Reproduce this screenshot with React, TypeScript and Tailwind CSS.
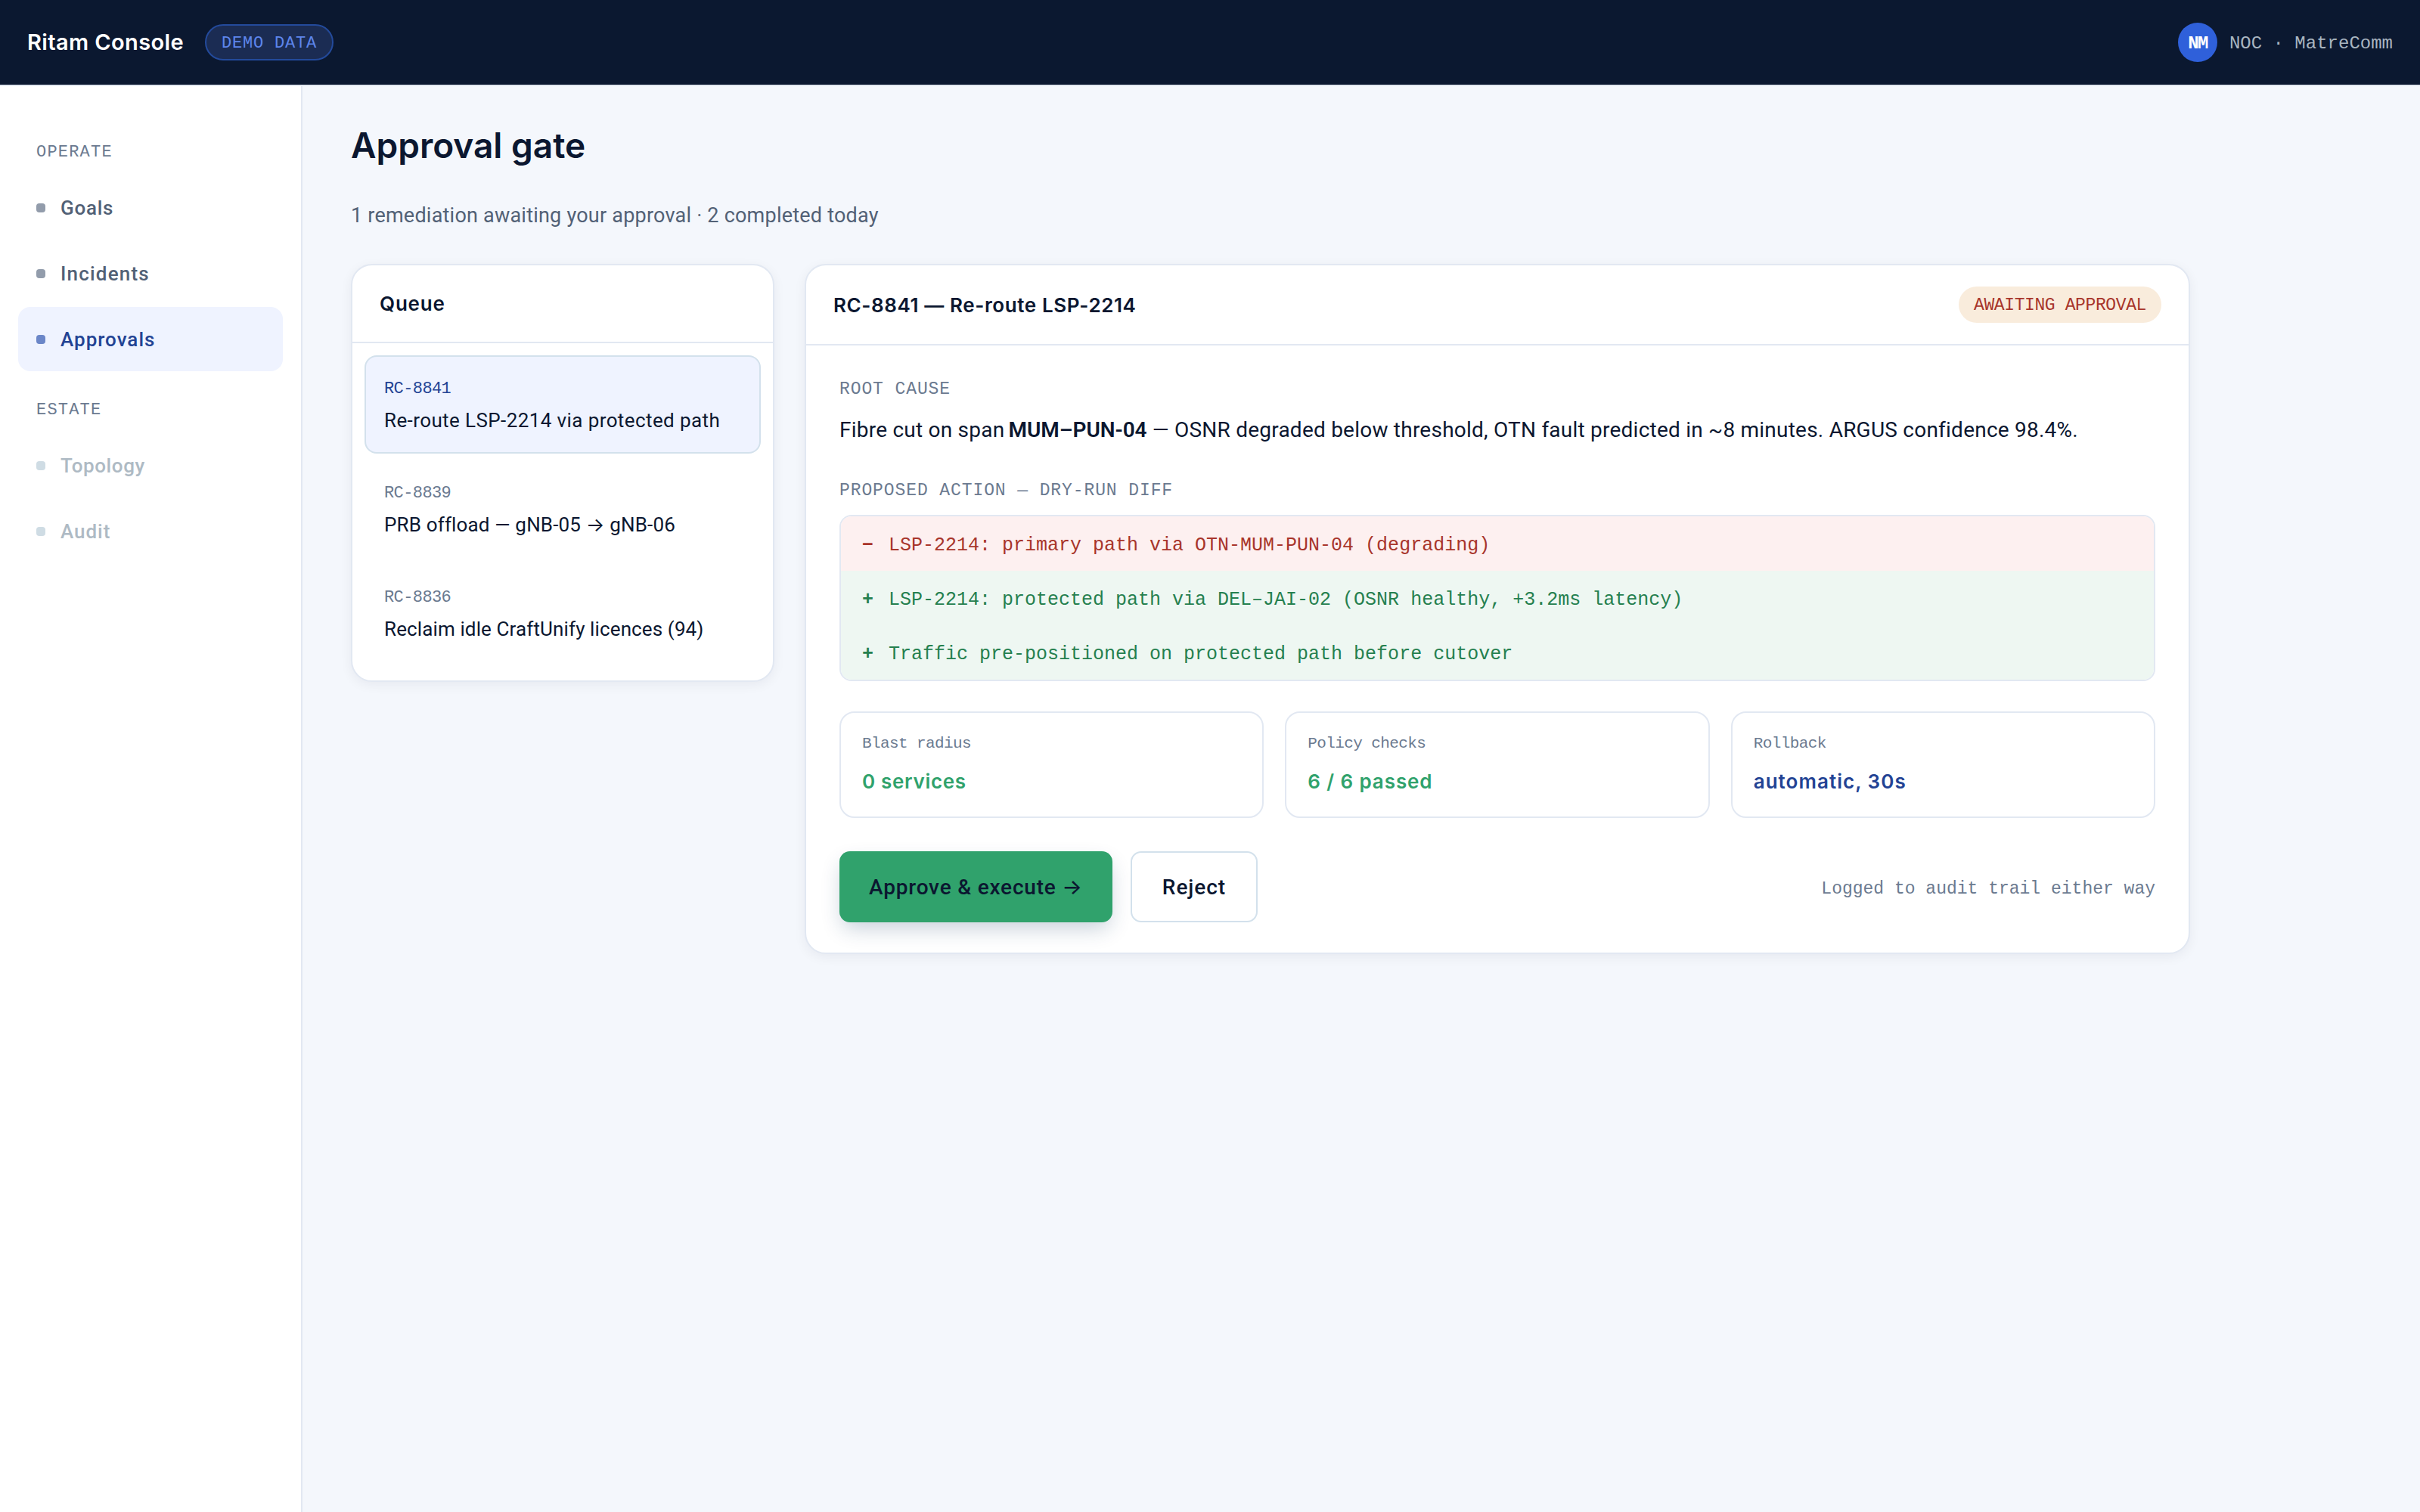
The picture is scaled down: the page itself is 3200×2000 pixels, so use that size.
import { useState } from "react";
import clsx from "clsx";

const MONO = "font-['Liberation_Mono',monospace]";
const HEADING = "font-['Inter',sans-serif]";

const NAV = [
  {
    label: "OPERATE",
    items: [
      { name: "Goals", tracking: "tracking-[0.72px]", disabled: false },
      { name: "Incidents", tracking: "tracking-[1.2px]", disabled: false },
      { name: "Approvals", tracking: "tracking-[1px]", disabled: false },
    ],
  },
  {
    label: "ESTATE",
    items: [
      { name: "Topology", tracking: "tracking-[0.6px]", disabled: true },
      { name: "Audit", tracking: "tracking-[0.97px]", disabled: true },
    ],
  },
];

const QUEUE = [
  {
    id: "RC-8841",
    title: "Re-route LSP-2214 via protected path",
    tracking: "tracking-[0.4px]",
  },
  {
    id: "RC-8839",
    title: "PRB offload — gNB-05 → gNB-06",
    tracking: "tracking-[0.16px]",
  },
  {
    id: "RC-8836",
    title: "Reclaim idle CraftUnify licences (94)",
    tracking: "tracking-[0.12px]",
  },
];

const DIFF = [
  { op: "−", text: "LSP-2214: primary path via OTN-MUM-PUN-04 (degrading)" },
  {
    op: "+",
    text: "LSP-2214: protected path via DEL–JAI-02 (OSNR healthy, +3.2ms latency)",
  },
  { op: "+", text: "Traffic pre-positioned on protected path before cutover" },
];

const STATS = [
  {
    label: "Blast radius",
    value: "0 services",
    style: "text-[#30a26c] tracking-[0.68px]",
  },
  {
    label: "Policy checks",
    value: "6 / 6 passed",
    style: "text-[#30a26c] tracking-[0.9px]",
  },
  {
    label: "Rollback",
    value: "automatic, 30s",
    style: "text-[#234394] tracking-[1.05px]",
  },
];

export default function App() {
  return (
    <div className="flex h-[2000px] flex-col bg-[#f4f7fc] font-['Roboto','Inter',sans-serif] text-[#0b1730]">
      <TopBar />
      <div className="flex min-h-0 flex-1">
        <Sidebar />
        <ApprovalScreen />
      </div>
    </div>
  );
}

function TopBar() {
  return (
    <header className="flex h-[114px] shrink-0 items-center border-b-2 border-[#e2e8f0] bg-[#0b1830] px-9">
      <span
        className={clsx(
          HEADING,
          "text-[29px] font-semibold tracking-[0.38px] text-white"
        )}
      >
        Ritam Console
      </span>
      <span
        className={clsx(
          MONO,
          "ml-7 flex h-12 items-center rounded-full border-2 border-[#234a9b] bg-[#1b2c53] px-5 pt-0.5 text-[22px] tracking-[0.8px] text-[#5e86ec]"
        )}
      >
        DEMO DATA
      </span>
      <div className={clsx(MONO, "ml-auto flex items-center gap-4")}>
        <span className="flex size-[52px] items-center justify-center rounded-full bg-[#2f60da] pt-1 text-[24px] font-bold tracking-[-1.6px] text-white">
          NM
        </span>
        <span className="pt-1 text-[24px] text-[#a9b5c0]">
          NOC · MatreComm
        </span>
      </div>
    </header>
  );
}

function Sidebar() {
  const [active, setActive] = useState("Approvals");

  return (
    <aside className="w-[400px] shrink-0 border-r-2 border-[#e2e8f2] bg-white px-6 pt-[38px]">
      {NAV.map((group) => (
        <div key={group.label}>
          <h2
            className={clsx(
              MONO,
              "px-6 pt-[35px] pb-[15px] text-[22px] leading-[30px] tracking-[1.2px] text-[#6b7a90]"
            )}
          >
            {group.label}
          </h2>
          {group.items.map((item) => (
            <button
              key={item.name}
              disabled={item.disabled}
              onClick={() => setActive(item.name)}
              className={clsx(
                "mb-0.5 flex h-[85px] w-full items-center gap-5 rounded-2xl px-6 text-[26px] font-medium",
                item.tracking,
                item.disabled && "text-[#aebac4]",
                !item.disabled && active !== item.name && "text-[#526176]",
                active === item.name && "bg-[#eff3ff] text-[#234394]"
              )}
            >
              <span
                className={clsx(
                  "size-3 rounded-[4px]",
                  item.disabled && "bg-[#cfdce4]",
                  !item.disabled && active !== item.name && "bg-[#929cab]",
                  active === item.name && "bg-[#6b86c8]"
                )}
              />
              <span className="pt-0.5">{item.name}</span>
            </button>
          ))}
        </div>
      ))}
    </aside>
  );
}

function ApprovalScreen() {
  const [selected, setSelected] = useState("RC-8841");

  return (
    <main className="flex-1 px-16 pt-[50px]">
      <h1 className={clsx(HEADING, "text-[46px] leading-[56px] font-semibold")}>
        Approval gate
      </h1>
      <p className="mt-[45px] text-[27px] leading-10 tracking-[0.22px] text-[#526176]">
        1 remediation awaiting your approval · 2 completed today
      </p>
      <div className="mt-11 grid max-w-[2432px] grid-cols-[560px_1fr] items-start gap-10">
        <Queue selected={selected} onSelect={setSelected} />
        <Detail />
      </div>
    </main>
  );
}

function Queue({
  selected,
  onSelect,
}: {
  selected: string;
  onSelect: (id: string) => void;
}) {
  return (
    <section className="rounded-[28px] border-2 border-[#e2e8f2] bg-white shadow-[0_4px_16px_rgba(11,24,48,0.06)]">
      <div className="flex h-[103px] items-center border-b-2 border-[#e2e8f2] px-9">
        <h2
          className={clsx(
            HEADING,
            "text-[26px] font-semibold tracking-[0.8px]"
          )}
        >
          Queue
        </h2>
      </div>
      <div className="flex flex-col gap-2 px-4 pt-4 pb-6">
        {QUEUE.map((item) => (
          <button
            key={item.id}
            onClick={() => onSelect(item.id)}
            className={clsx(
              "flex h-[130px] flex-col gap-[7px] rounded-2xl border-2 px-6 pt-[27px] text-left",
              selected === item.id
                ? "border-[#d3e1ec] bg-[#eff3ff]"
                : "border-transparent"
            )}
          >
            <span
              className={clsx(
                MONO,
                "text-[22px] leading-8 tracking-[-0.6px]",
                selected === item.id ? "text-[#234394]" : "text-[#6b7a90]"
              )}
            >
              {item.id}
            </span>
            <span className={clsx("text-[26px] leading-9", item.tracking)}>
              {item.title}
            </span>
          </button>
        ))}
      </div>
    </section>
  );
}

function Detail() {
  return (
    <section className="rounded-[28px] border-2 border-[#e2e8f2] bg-white shadow-[0_4px_16px_rgba(11,24,48,0.06)]">
      <div className="flex h-[106px] items-center justify-between border-b-2 border-[#e2e8f2] px-9">
        <h2
          className={clsx(
            HEADING,
            "text-[26px] font-semibold tracking-[0.6px]"
          )}
        >
          RC-8841 — Re-route LSP-2214
        </h2>
        <span
          className={clsx(
            MONO,
            "flex h-12 items-center rounded-full bg-[#f9ecdc] px-5 pt-0.5 text-[23px] tracking-[-0.39px] text-[#a8352b]"
          )}
        >
          AWAITING APPROVAL
        </span>
      </div>

      <div className="px-11 pt-[42px] pb-10">
        <Label>ROOT CAUSE</Label>
        <p className="mt-4 text-[28px] leading-[44px] tracking-[0.23px]">
          Fibre cut on span{" "}
          <strong className="-ml-0.5 font-semibold tracking-[-0.07px]">
            MUM–PUN-04
          </strong>{" "}
          — OSNR degraded below threshold, OTN fault predicted in ~8 minutes.
          ARGUS confidence 98.4%.
        </p>

        <div className="mt-[42px]">
          <Label>PROPOSED ACTION — DRY-RUN DIFF</Label>
        </div>
        <div
          className={clsx(
            MONO,
            "mt-4 overflow-hidden rounded-2xl border-2 border-[#e2e8f2] text-[25px]"
          )}
        >
          {DIFF.map((line) => (
            <div
              key={line.text}
              className={clsx(
                "flex h-[72px] items-center gap-5 px-7 pt-[5px]",
                line.op === "+"
                  ? "bg-[#eef7f2] text-[#25804f]"
                  : "bg-[#fdf0f0] text-[#a8352b]"
              )}
            >
              <span className="font-bold">{line.op}</span>
              <span>{line.text}</span>
            </div>
          ))}
        </div>

        <div className="mt-10 grid grid-cols-3 gap-7">
          {STATS.map((stat) => (
            <div
              key={stat.label}
              className="h-[141px] rounded-[20px] border-2 border-[#e2e8f2] px-7 pt-[27px]"
            >
              <div
                className={clsx(
                  MONO,
                  "text-[21px] leading-7 tracking-[-0.6px] text-[#6b7a90]"
                )}
              >
                {stat.label}
              </div>
              <div
                className={clsx(
                  HEADING,
                  "mt-[18px] text-[26px] leading-9 font-semibold",
                  stat.style
                )}
              >
                {stat.value}
              </div>
            </div>
          ))}
        </div>

        <div className="mt-11 flex items-center gap-6">
          <button className="h-[94px] w-[361px] rounded-[14px] bg-[#30a26c] pt-0.5 text-[28px] font-medium tracking-[0.8px] shadow-[0_12px_28px_-4px_rgba(20,60,100,0.24)]">
            Approve &amp; execute →
          </button>
          <button className="h-[94px] w-[168px] rounded-[14px] border-2 border-[#d3e1ec] bg-white pt-0.5 text-[28px] font-medium tracking-[0.95px]">
            Reject
          </button>
          <span
            className={clsx(MONO, "ml-auto pt-1.5 text-[23px] text-[#6b7a90]")}
          >
            Logged to audit trail either way
          </span>
        </div>
      </div>
    </section>
  );
}

function Label({ children }: { children: string }) {
  return (
    <h3
      className={clsx(
        MONO,
        "text-[23px] leading-8 tracking-[0.9px] text-[#6b7a90]"
      )}
    >
      {children}
    </h3>
  );
}
